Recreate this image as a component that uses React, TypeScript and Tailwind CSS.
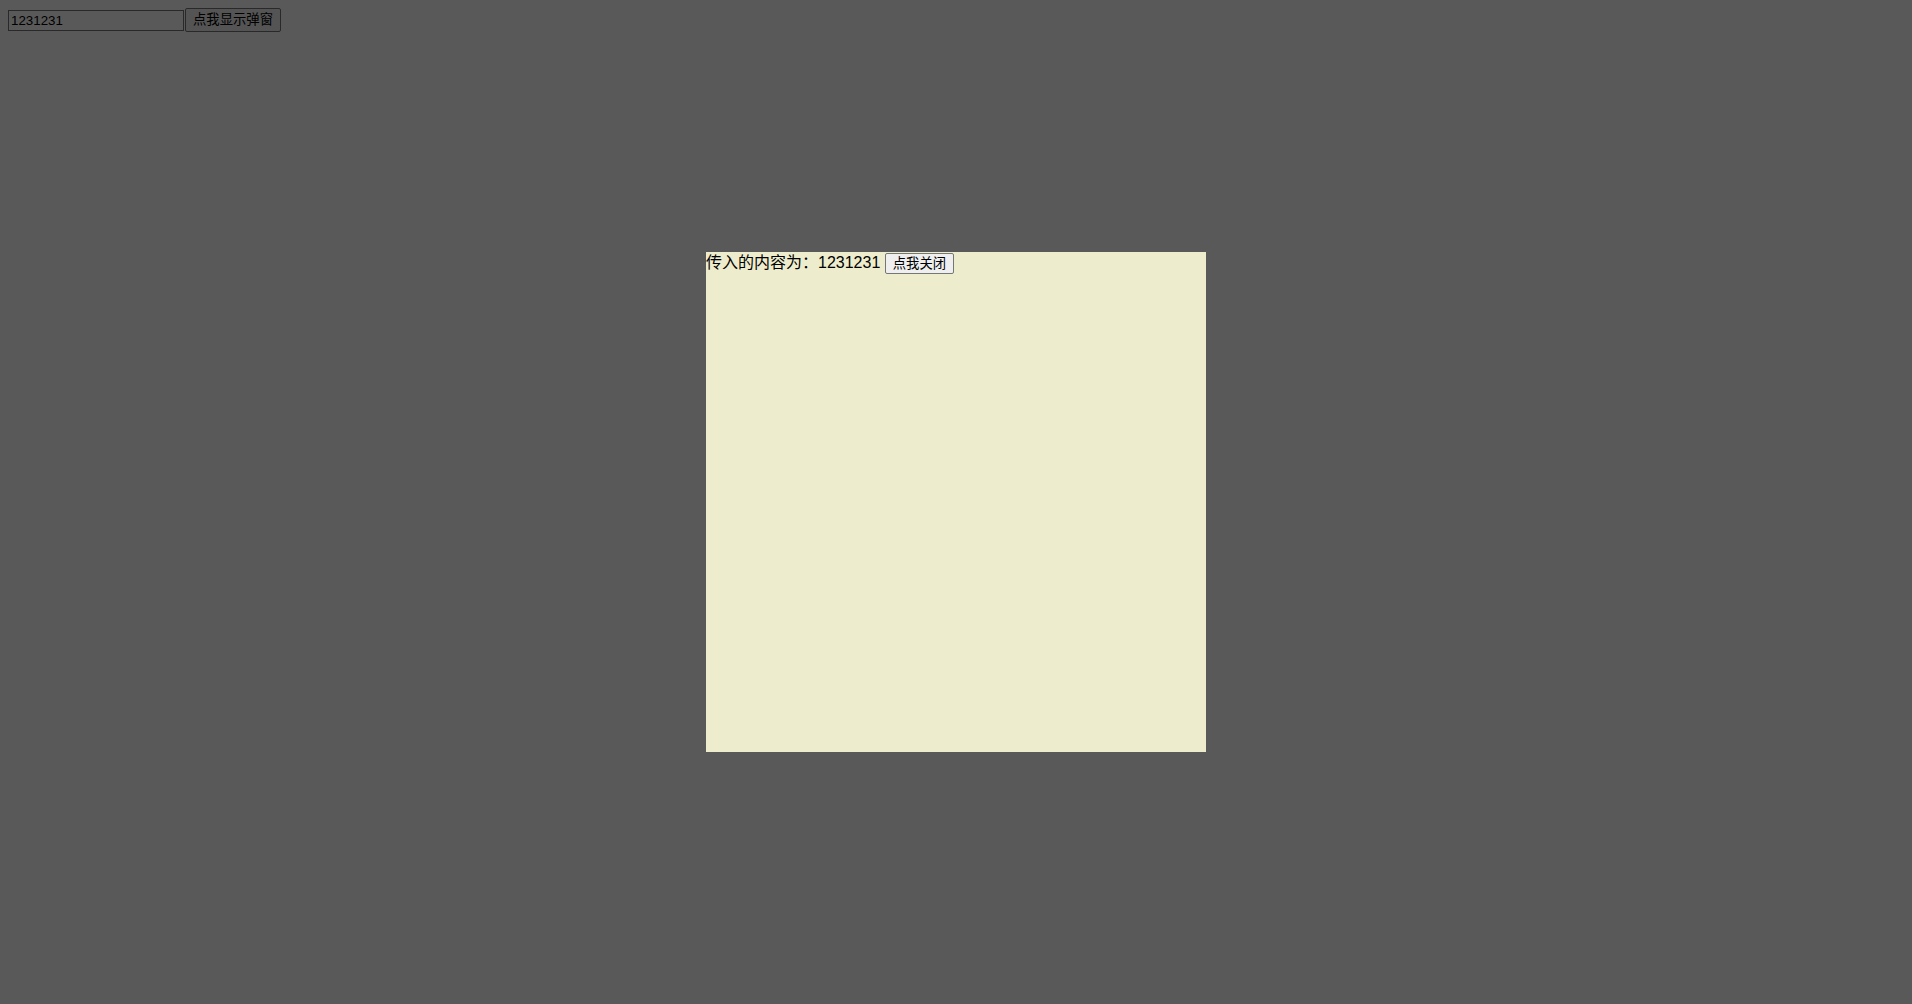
import { useState } from "react";

export default function App() {
  const [value, setValue] = useState("1231231");
  const [open, setOpen] = useState(true);

  return (
    <div className="min-h-screen bg-white p-2 font-['Liberation_Sans','Noto_Sans_CJK_SC',sans-serif] text-black">
      {/* Trigger row */}
      <div className="flex items-center">
        <input
          value={value}
          onChange={(e) => setValue(e.target.value)}
          className="h-[21px] w-[176px] border border-[#767676] bg-white px-[2px] text-[13.33px] leading-none outline-none"
        />
        <button
          onClick={() => setOpen(true)}
          className="ml-px h-[24px] rounded-[2px] border border-[#767676] bg-[#efefef] px-[7px] text-[13.33px] leading-none"
        >
          点我显示弹窗
        </button>
      </div>

      {/* Modal */}
      {open && (
        <div className="fixed inset-0 flex items-center justify-center bg-black/65">
          <div className="h-[500px] w-[500px] bg-[#ededcd] text-[16px] leading-[22px]">
            <span>传入的内容为：{value}</span>{" "}
            <button
              onClick={() => setOpen(false)}
              className="mt-px h-[21px] rounded-[2px] border border-[#767676] bg-[#efefef] px-[7px] align-top text-[13.33px] leading-none"
            >
              点我关闭
            </button>
          </div>
        </div>
      )}
    </div>
  );
}
